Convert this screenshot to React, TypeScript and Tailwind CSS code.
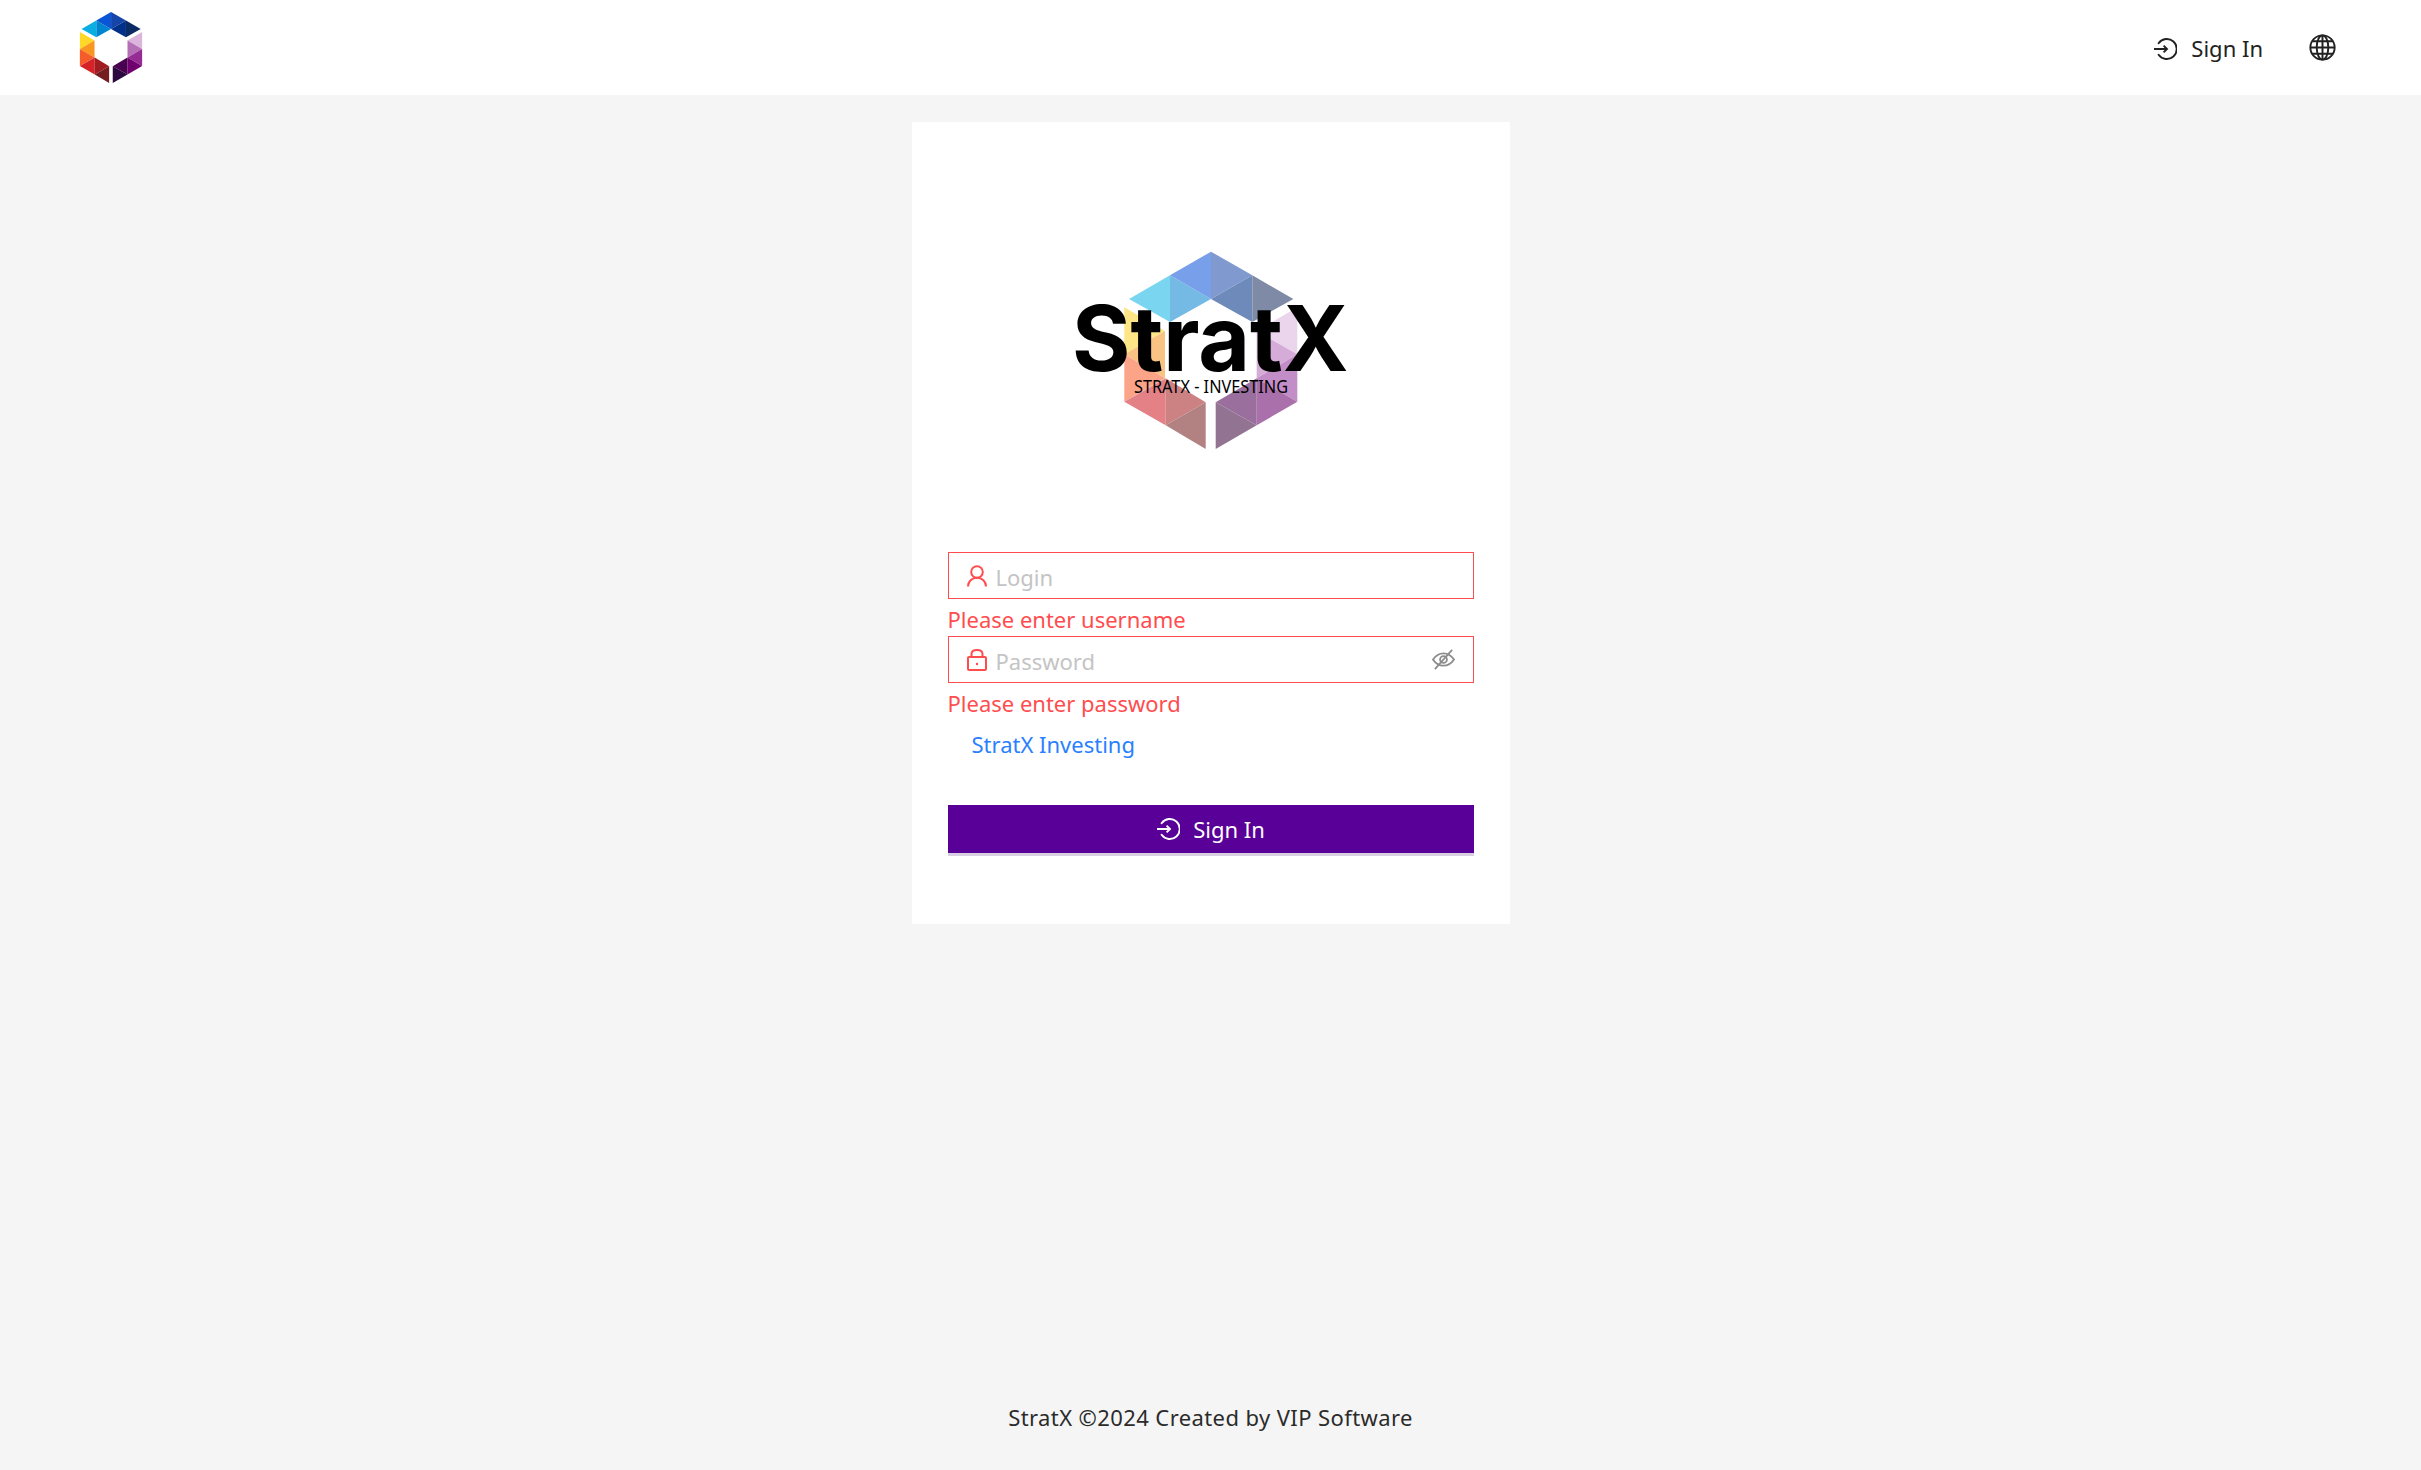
import React from 'react'

const SHAPES: string[] = [
  '390,136 267,207 390,276',
  '390,136 513,207 390,276',
  '390,136 513,65 513,207',
  '513,65 637,136 513,207',
  '513,207 637,136 637,276',
  '637,136 760,207 637,276',
  '253,232 375,303 253,373',
  '375,303 253,373 375,445',
  '253,373 375,445 253,515',
  '253,515 377,445 377,586',
  '377,445 497,517 377,586',
  '497,517 377,586 497,657',
  '772,232 650,303 772,373',
  '650,303 772,373 650,445',
  '772,373 650,445 772,515',
  '772,515 650,445 650,586',
  '650,445 527,517 650,586',
  '527,517 650,586 527,657',
]

const SMALL_COLORS = ['#0baee0', '#0085cf', '#0a54d6', '#1545a8', '#00308a', '#0c2a63', '#ffd726', '#f9961f', '#f55c2a', '#d42428', '#a01d22', '#741c20', '#dcb5dd', '#b56fb5', '#962b94', '#6f006e', '#4a0050', '#2c0a40']
const BIG_COLORS = ['#79d5f0', '#74bae4', '#789fea', '#8099cf', '#6d8abb', '#7f8ba6', '#fee585', '#f9c384', '#fba488', '#e38187', '#cc8183', '#b28282', '#ead5ec', '#d5acd8', '#c38dc8', '#aa70ab', '#9a6f9e', '#927391']

const Shards = ({ colors }: { colors: string[] }) => (
  <>
    {SHAPES.map((points, i) => (
      <polygon key={i} points={points} fill={colors[i]} />
    ))}
  </>
)

const SignInIcon = ({ className }: { className: string }) => (
  <svg viewBox="0 0 24 24" fill="none" stroke="currentColor" strokeWidth="1.9" className={className}>
    <path d="M5.6 6.2A10 10 0 1 1 5.6 17.8" strokeLinecap="round" />
    <path d="M1 12h13M10.6 8.6 14 12l-3.4 3.4" />
  </svg>
)

const GlobeIcon = () => (
  <svg viewBox="0 0 28 28" fill="none" stroke="#222" strokeWidth="2" className="h-[27px] w-[27px]">
    <circle cx="14" cy="14" r="12.6" />
    <ellipse cx="14" cy="14" rx="6" ry="12.6" />
    <path d="M14 1.4v25.2M1.4 14h25.2M3.4 7.6h21.2M3.4 20.4h21.2" />
  </svg>
)

const UserIcon = () => (
  <svg viewBox="0 0 20 22" fill="none" stroke="#ff4d4f" strokeWidth="2" className="h-[22px] w-[20px] shrink-0">
    <circle cx="10" cy="7" r="5.8" />
    <path d="M1 21.500c0-5 4-8.700 9-8.700s9 3.700 9 8.700" />
  </svg>
)

const LockIcon = () => (
  <svg viewBox="0 0 20 22" fill="none" stroke="#ff4d4f" strokeWidth="2" className="h-[22px] w-[20px] shrink-0">
    <rect x="1" y="8" width="18" height="13" rx="1" />
    <path d="M4.500 8V5C4.500 2.500 6.800 1 10 1s5.500 1.500 5.500 4v3" />
    <circle cx="10" cy="15" r="1.200" fill="#ff4d4f" stroke="none" />
  </svg>
)

const EyeOffIcon = () => (
  <svg viewBox="0 0 24 22" fill="none" stroke="#8c8c8c" strokeWidth="1.9" className="h-[21px] w-[23px] shrink-0">
    <path d="M1 11c3-4.500 6.800-6.500 11-6.500S20 6.500 23 11c-3 4.500-6.800 6.500-11 6.500S4 15.500 1 11Z" />
    <circle cx="12" cy="11" r="3.600" />
    <path d="M3 21 21 1" />
  </svg>
)

const Field = ({ icon, placeholder, type, error, suffix }: { icon: React.ReactNode; placeholder: string; type: string; error: string; suffix?: React.ReactNode }) => (
  <div className="flex flex-col">
    <div className="flex h-[47px] items-center gap-[9px] border border-[#ff4d4f] bg-white pl-[18px] pr-[18px]">
      {icon}
      <input type={type} placeholder={placeholder} className="min-w-0 flex-1 bg-transparent pt-[3px] text-[22px] outline-none placeholder:text-[#c4c4c4]" />
      {suffix}
    </div>
    <div className="h-[37px] text-[22px] leading-[40px] text-[#ff4d4f]">{error}</div>
  </div>
)

export default function App() {
  return (
    <div className="flex min-h-screen flex-col bg-[#f5f5f5] font-['Noto_Sans',sans-serif] text-[22px] text-[#222]">
      <header className="flex h-[95px] items-center justify-between bg-white pl-[79px] pr-[85px]">
        <svg viewBox="253 65 519 592" className="h-[71px] w-[64px]">
          <Shards colors={SMALL_COLORS} />
        </svg>
        <div className="flex items-center pt-[2px]">
          <a className="flex items-center gap-[14px]">
            <SignInIcon className="h-[24px] w-[24px]" />
            <span>Sign In</span>
          </a>
          <span className="ml-[46px] -translate-y-[1px]">
            <GlobeIcon />
          </span>
        </div>
      </header>

      <main className="flex flex-1 justify-center pt-[27px]">
        <div className="flex h-[802px] w-[598px] flex-col bg-white px-[36px]">
          <div className="flex h-[430px] justify-center pr-[2px] pt-[108px]">
            <svg viewBox="0 0 1020 690" className="h-[230px] w-[340px]">
              <Shards colors={BIG_COLORS} />
              <text x="511" y="422" textAnchor="middle" textLength="830" lengthAdjust="spacingAndGlyphs" fontFamily="Inter, sans-serif" fontWeight="700" fontSize="272" fill="#000">StratX</text>
              <text x="513" y="488" textAnchor="middle" textLength="462" lengthAdjust="spacingAndGlyphs" fontFamily="Noto Sans, sans-serif" fontSize="52" fill="#000">STRATX - INVESTING</text>
            </svg>
          </div>
          <Field icon={<UserIcon />} placeholder="Login" type="text" error="Please enter username" />
          <Field icon={<LockIcon />} placeholder="Password" type="password" error="Please enter password" suffix={<EyeOffIcon />} />
          <a className="mt-[4px] pl-[24px] text-[22px] leading-[40px] text-[#2a7fff]">StratX Investing</a>
          <button className="mt-[41px] flex h-[48px] items-center justify-center gap-[13px] bg-[#590099] text-[22px] text-white shadow-[0_3px_0_#d9cfe3]">
            <SignInIcon className="h-[24px] w-[24px]" />
            <span>Sign In</span>
          </button>
        </div>
      </main>

      <footer className="pb-[38px] text-center text-[22px] leading-[30px] tracking-[0.4px] text-[#2b2b2b]">StratX ©2024 Created by VIP Software</footer>
    </div>
  )
}
